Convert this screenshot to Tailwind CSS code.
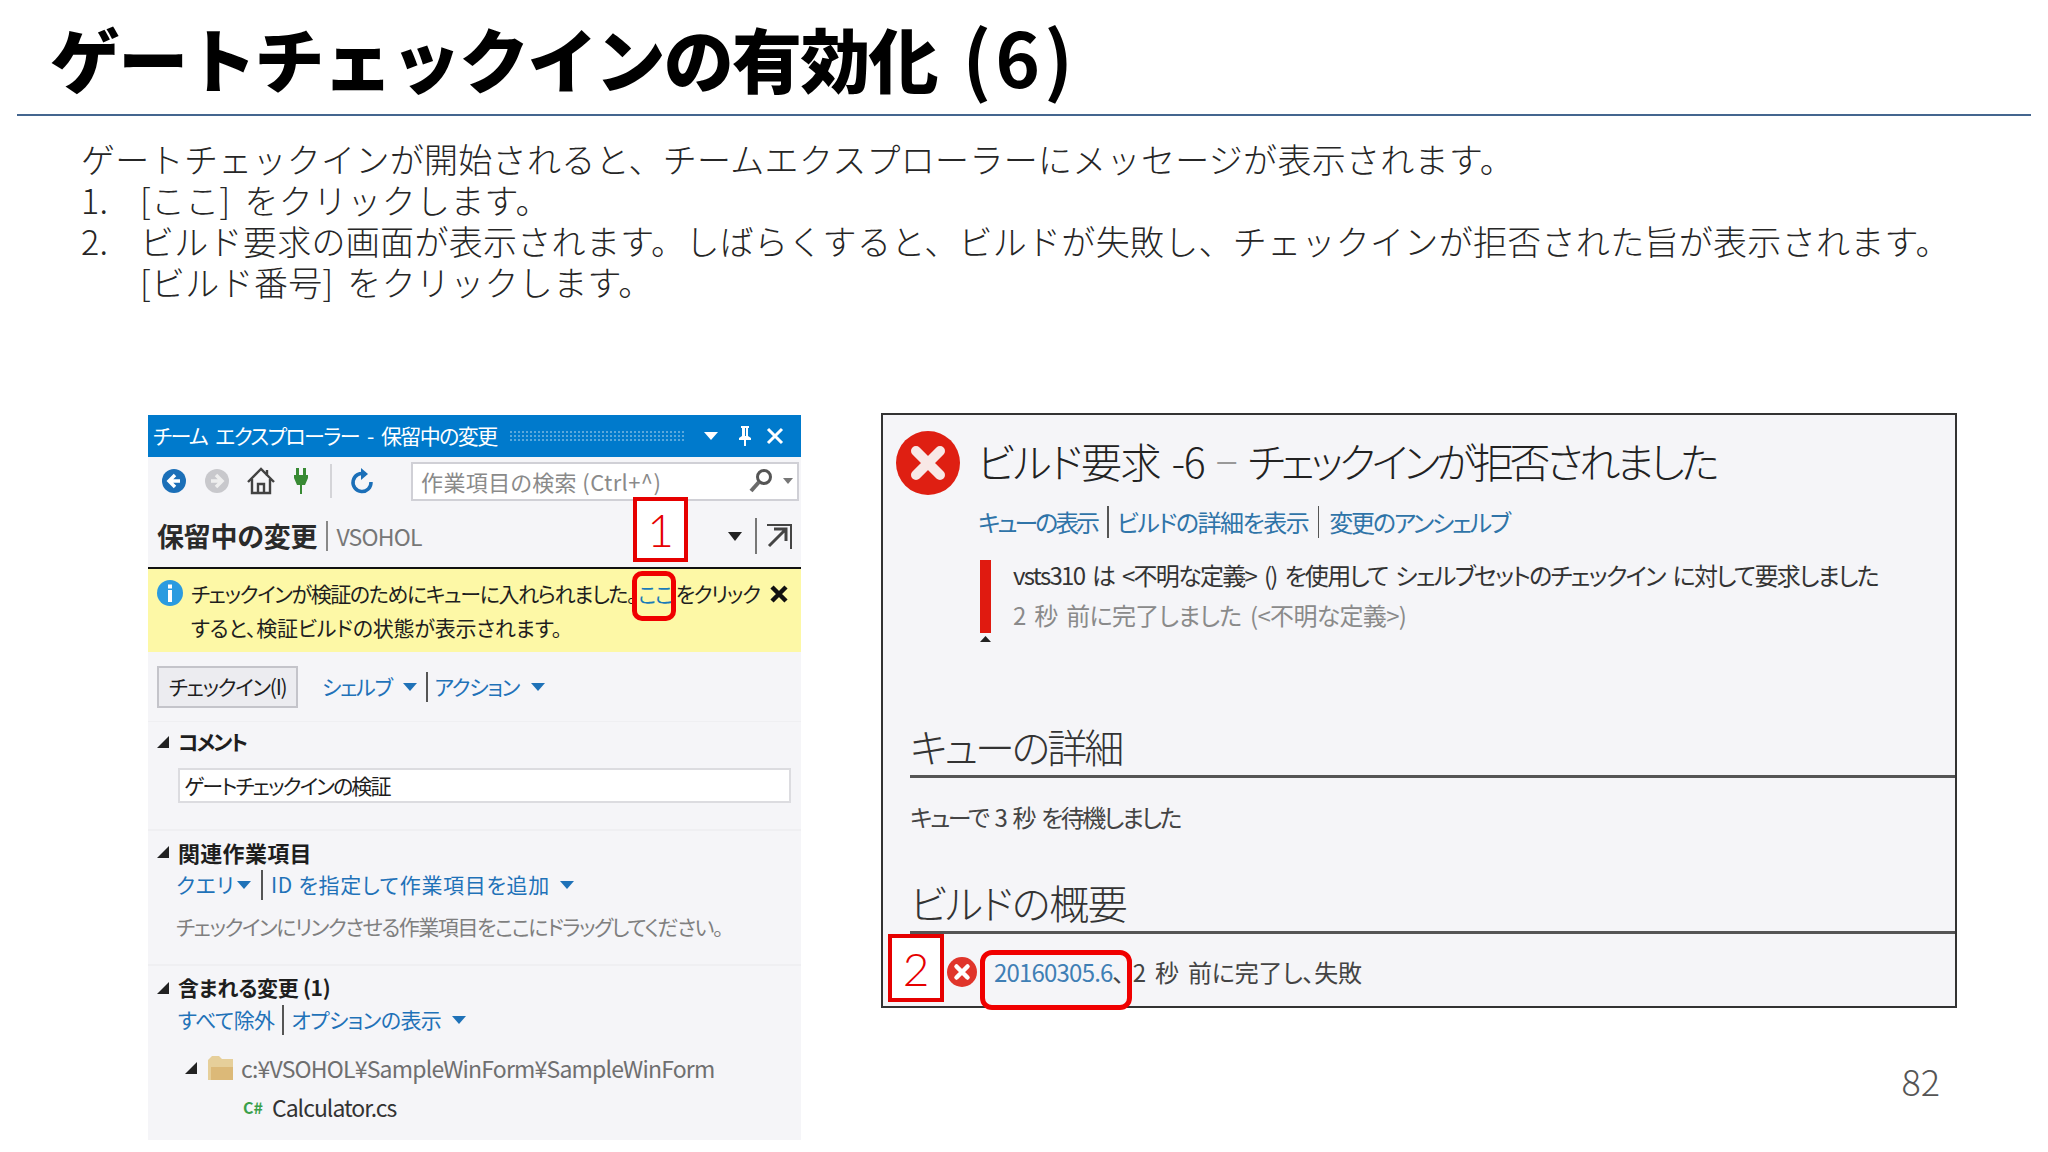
<!DOCTYPE html>
<html lang="ja">
<head>
<meta charset="UTF-8">
<title>ゲートチェックインの有効化 (6)</title>
<script src="https://cdn.jsdelivr.net/npm/@tailwindcss/browser@4"></script>
</head>
<body class="bg-white w-[2048px] h-[1152px] overflow-hidden font-['Noto_Sans_CJK_JP','Noto_Sans',sans-serif] text-[#262626]">
  <!-- slide title -->
  <header class="h-[116px] mx-[17px] border-b-2 border-[#44668f] pl-[33px] pt-[10px]">
    <h1 class="text-[70px] leading-[96px] font-black text-black tracking-[-1.8px] whitespace-nowrap">ゲートチェックインの有効化<span class="ml-[26px] text-[76px] leading-none tracking-[4px] font-bold">(6)</span></h1>
  </header>

  <!-- slide body -->
  <div class="pl-[81px] pt-[22px] h-[297px] text-[34px] leading-[41px] text-[#262626] tracking-[0.3px] font-light whitespace-nowrap [word-spacing:6px]">
    <p>ゲートチェックインが開始されると、チームエクスプローラーにメッセージが表示されます。</p>
    <div class="flex"><span class="w-[59px]">1.</span><span>[ここ] をクリックします。</span></div>
    <div class="flex"><span class="w-[59px]">2.</span><span>ビルド要求の画面が表示されます。しばらくすると、ビルドが失敗し、チェックインが拒否された旨が表示されます。</span></div>
    <div class="pl-[59px]">[ビルド番号] をクリックします。</div>
  </div>

  <div class="flex items-start pl-[148px]">
    <!-- team explorer -->
    <div class="relative mt-[2px] w-[653px] h-[725px] bg-[#f5f5f8] shrink-0 whitespace-nowrap text-[#1e1e1e] [font-feature-settings:'palt']">
      <div class="h-[42px] bg-[#007acc] flex items-center pl-[5px] text-white text-[21px] tracking-[-1.6px] [word-spacing:5px]">
        <span class="w-[356px]">チーム エクスプローラー - 保留中の変更</span>
        <div class="w-[177px] h-[12px] bg-[radial-gradient(#5aa8dc_1px,transparent_1px)] bg-[length:4px_4px]"></div>
        <svg class="ml-[17px]" width="16" height="10" viewBox="0 0 16 10"><path d="M1 1h14l-7 8z" fill="#fff"/></svg>
        <svg class="ml-[19px]" width="14" height="22" viewBox="0 0 14 22"><path d="M3 1h8v2h-1v8l3 2v2H8v6H6v-6H1v-2l3-2V3H3zM7 3v8h1V3z" fill="#fff"/></svg>
        <svg class="ml-[14px]" width="18" height="18" viewBox="0 0 18 18"><path d="M2 2l14 14M16 2L2 16" stroke="#fff" stroke-width="3"/></svg>
      </div>

      <div class="h-[48px] flex items-center pl-[14px] pr-[1px]">
        <svg width="24" height="24" viewBox="0 0 24 24"><circle cx="12" cy="12" r="12" fill="#1b6fb8"/><path d="M13 6l-6 6 6 6M7 12h11" fill="none" stroke="#fff" stroke-width="3.5"/></svg>
        <svg class="ml-[19px]" width="24" height="24" viewBox="0 0 24 24"><circle cx="12" cy="12" r="12" fill="#c8c8cc"/><path d="M11 6l6 6-6 6M17 12H6" fill="none" stroke="#eee" stroke-width="3.5"/></svg>
        <svg class="ml-[17px]" width="30" height="30" viewBox="0 0 30 30"><path d="M2 16L15 3l13 13M6 13v14h18V13M12 27v-9h6v9M21 4v6" fill="none" stroke="#424242" stroke-width="2.4"/></svg>
        <svg class="ml-[17px]" width="16" height="28" viewBox="0 0 16 28"><path d="M3 1h3v7H3zM10 1h3v7h-3zM1 8h14v3l-3 7H9v9H7v-9H4l-3-7z" fill="#388a34"/></svg>
        <div class="ml-[21px] w-[2px] h-[34px] bg-[#d4d4d8]"></div>
        <svg class="ml-[18px]" width="24" height="28" viewBox="0 0 24 28"><path d="M15 7a9 9 0 1 0 6 8" fill="none" stroke="#1b6fb8" stroke-width="3.5"/><path d="M11 1v12l7-6z" fill="#1b6fb8"/></svg>
        <div class="ml-[37px] w-[388px] h-[39px] bg-white border-2 border-[#d0d0d6] flex items-center pl-[8px] pr-[4px] text-[22px] text-[#8a8a8a] tracking-[0.4px]">
          <span>作業項目の検索 (Ctrl+^)</span>
          <svg class="ml-auto" width="26" height="26" viewBox="0 0 26 26"><circle cx="16" cy="9" r="6.5" fill="none" stroke="#555" stroke-width="3"/><path d="M11 14l-8 9" stroke="#6b6b6b" stroke-width="4"/></svg>
          <svg class="ml-[9px]" width="10" height="6" viewBox="0 0 10 6"><path d="M0 0h10L5 6z" fill="#777"/></svg>
        </div>
      </div>

      <div class="h-[62px] flex items-center pl-[9px]">
        <span class="text-[27px] font-bold tracking-[-0.2px] text-[#2a2a2a]">保留中の変更</span>
        <div class="ml-[9px] w-[2px] h-[30px] bg-[#888]"></div>
        <span class="ml-[8px] text-[23px] text-[#777] tracking-[-0.8px]">VSOHOL</span>
        <svg class="ml-[306px]" width="14" height="9" viewBox="0 0 14 9"><path d="M0 0h14L7 9z" fill="#222"/></svg>
        <div class="ml-[13px] w-[2px] h-[36px] bg-[#777]"></div>
        <svg class="ml-[9px]" width="26" height="26" viewBox="0 0 26 26"><path d="M1 2h24v24" fill="none" stroke="#444" stroke-width="2"/><path d="M3 23L20 6M8 6h12v12" fill="none" stroke="#444" stroke-width="3"/></svg>
      </div>

      <div class="h-[85px] bg-[#fdf8a6] border-t-2 border-[#111] relative pl-[43px] pt-[7px] text-[21px] leading-[34px]">
        <svg class="absolute left-[9px] top-[11px]" width="26" height="26" viewBox="0 0 26 26"><circle cx="13" cy="13" r="13" fill="#2a9be0"/><rect x="11" y="10" width="4" height="12" fill="#fff"/><rect x="11" y="4.5" width="4" height="4" fill="#fff"/></svg>
        <div class="tracking-[-1.4px]">チェックインが検証のためにキューに入れられました。<span class="text-[#1a7bb8] ml-[2px]">ここ</span><span class="ml-[4px]">をクリック</span></div>
        <div class="tracking-[-0.2px]">すると、検証ビルドの状態が表示されます。</div>
        <svg class="absolute left-[621px] top-[15px]" width="20" height="20" viewBox="0 0 20 20"><path d="M3 3l14 14M17 3L3 17" stroke="#111" stroke-width="4.5"/></svg>
      </div>

      <div class="h-[70px] flex items-center pl-[9px] border-b border-[#efeff2] text-[21px] tracking-[-1.3px]">
        <div class="w-[141px] h-[42px] bg-[#ececf0] border-2 border-[#c4c4ca] flex items-center justify-center">チェックイン(I)</div>
        <span class="ml-[24px] text-[#1f72b8]">シェルブ</span>
        <svg class="ml-[11px]" width="14" height="8" viewBox="0 0 14 8"><path d="M0 0h14L7 8z" fill="#1f72b8"/></svg>
        <div class="ml-[9px] w-[2px] h-[30px] bg-[#555]"></div>
        <span class="ml-[7px] text-[#1f72b8]">アクション</span>
        <svg class="ml-[12px]" width="14" height="8" viewBox="0 0 14 8"><path d="M0 0h14L7 8z" fill="#1f72b8"/></svg>
      </div>

      <!-- comment -->
      <div class="h-[109px] border-b-2 border-[#efeff2] pl-[30px] pt-[4px]">
        <div class="flex items-center h-[32px] -ml-[21px] text-[21px] font-bold tracking-[-2px]">
          <svg width="12" height="12" viewBox="0 0 12 12"><path d="M12 0v12H0z" fill="#222"/></svg>
          <span class="ml-[9px]">コメント</span>
        </div>
        <div class="mt-[10px] w-[613px] h-[35px] bg-white border-2 border-[#dcdce0] flex items-center pl-[4px] text-[21px] tracking-[-1.9px]">ゲートチェックインの検証</div>
      </div>

      <!-- related work items -->
      <div class="h-[135px] border-b-2 border-[#efeff2] pl-[30px] pt-[5px] text-[21px]">
        <div class="flex items-center h-[32px] -ml-[21px] font-bold text-[22px] tracking-[0.3px]">
          <svg width="12" height="12" viewBox="0 0 12 12"><path d="M12 0v12H0z" fill="#222"/></svg>
          <span class="ml-[9px]">関連作業項目</span>
        </div>
        <div class="flex items-center h-[32px] mt-[1px] -ml-[2px] text-[#1f72b8] tracking-[0.7px]">
          <span class="w-[51px]">クエリ</span>
          <svg class="ml-[10px]" width="14" height="8" viewBox="0 0 14 8"><path d="M0 0h14L7 8z" fill="#1f72b8"/></svg>
          <div class="ml-[10px] w-[2px] h-[30px] bg-[#555]"></div>
          <span class="ml-[8px]">ID を指定して作業項目を追加</span>
          <svg class="ml-[10px]" width="14" height="8" viewBox="0 0 14 8"><path d="M0 0h14L7 8z" fill="#1f72b8"/></svg>
        </div>
        <div class="mt-[9px] h-[32px] -ml-[2px] leading-[32px] text-[#7f7f7f] tracking-[-1.45px]">チェックインにリンクさせる作業項目をここにドラッグしてください。</div>
      </div>

      <!-- included changes -->
      <div class="pl-[30px] pt-[6px] text-[21px]">
        <div class="flex items-center h-[32px] -ml-[21px] font-bold tracking-[-0.3px]">
          <svg width="12" height="12" viewBox="0 0 12 12"><path d="M12 0v12H0z" fill="#222"/></svg>
          <span class="ml-[9px]">含まれる変更 (1)</span>
        </div>
        <div class="flex items-center h-[32px] text-[#1f72b8] tracking-[-0.6px]">
          <span>すべて除外</span>
          <div class="ml-[8px] w-[2px] h-[30px] bg-[#555]"></div>
          <span class="ml-[7px]">オプションの表示</span>
          <svg class="ml-[11px]" width="14" height="8" viewBox="0 0 14 8"><path d="M0 0h14L7 8z" fill="#1f72b8"/></svg>
        </div>
        <div class="flex items-center mt-[14px] h-[36px] pl-[7px] text-[#6f6f6f] text-[23px] tracking-[-0.8px]">
          <svg width="12" height="12" viewBox="0 0 12 12"><path d="M12 0v12H0z" fill="#222"/></svg>
          <svg class="ml-[10px]" width="27" height="26" viewBox="0 0 27 26"><path d="M1 25V5l4-4h7l3 3h11v21z" fill="#e6cf9a"/><path d="M4 25V12h22v13z" fill="#dcb978"/></svg>
          <span class="ml-[7px]">c:¥VSOHOL¥SampleWinForm¥SampleWinForm</span>
        </div>
        <div class="flex items-center mt-[3px] h-[36px] pl-[65px] text-[#333] text-[23px] tracking-[-1px]">
          <span class="w-[29px] text-[16px] leading-none font-bold text-[#3aa04a] tracking-[0px]">C#</span>
          <span>Calculator.cs</span>
        </div>
      </div>

      <!-- callouts -->
      <div class="absolute left-[485px] top-[82px] w-[55px] h-[65px] bg-white border-[4px] border-[#e60000] flex items-center justify-center text-[46px] text-[#e60000] font-light font-['Lato']">1</div>
      <div class="absolute left-[484px] top-[156px] w-[44px] h-[50px] border-[5px] border-[#f00000] rounded-[10px]"></div>
    </div>

    <!-- build request -->
    <div class="ml-[80px] shrink-0 w-[1076px]">
      <div class="relative h-[595px] bg-[#f5f5f8] border-2 border-[#333] whitespace-nowrap [font-feature-settings:'palt'] [word-spacing:4px]">
        <div class="flex items-center h-[96px] pl-[13px] pb-[4px]">
          <svg class="mt-[4px]" width="64" height="64" viewBox="0 0 64 64"><circle cx="32" cy="32" r="32" fill="#df1f12"/><path d="M20 20l24 24M44 20L20 44" stroke="#f8e8e6" stroke-width="10" stroke-linecap="round"/></svg>
          <span class="ml-[17px] text-[41px] font-light text-[#222] tracking-[-1.5px]">ビルド要求 -6 <span class="text-[#999]">−</span> <span class="tracking-[-4px]">チェックインが拒否されました</span></span>
        </div>
        <div class="flex items-center h-[36px] mt-[-7px] pl-[95px] text-[24px] text-[#2f74a8]">
          <span class="tracking-[-3.1px]">キューの表示</span>
          <div class="ml-[10px] w-[2px] h-[32px] bg-[#555]"></div>
          <span class="ml-[8px] tracking-[-1.5px]">ビルドの詳細を表示</span>
          <div class="ml-[10px] w-[1px] h-[32px] bg-[#555]"></div>
          <span class="ml-[10px] tracking-[-2.2px]">変更のアンシェルブ</span>
        </div>
        <div class="flex mt-[20px] pl-[97px]">
          <div class="flex flex-col items-center w-[11px]">
            <div class="w-[11px] h-[73px] bg-[#e01a10]"></div>
            <svg class="mt-[3px]" width="11" height="6" viewBox="0 0 11 6"><path d="M0 6h11L5.500 0z" fill="#222"/></svg>
          </div>
          <div class="ml-[22px] -mt-[5px] text-[24px] leading-[40px]">
            <div class="text-[#333] tracking-[-1.7px]">vsts310 は &lt;不明な定義&gt; () を使用して シェルブセットのチェックイン に対して要求しました</div>
            <div class="text-[#8a8a8a] tracking-[-0.7px]">2 秒 前に完了しました (&lt;不明な定義&gt;)</div>
          </div>
        </div>
        <div class="ml-[27px] mt-[75px] h-[61px] border-b-[3px] border-[#555] text-[40px] leading-[58px] text-[#333] tracking-[-3px] font-light">キューの詳細</div>
        <div class="ml-[27px] mt-[22px] h-[34px] leading-[34px] text-[24px] text-[#444] tracking-[-2.4px]">キューで 3 秒 を待機しました</div>
        <div class="ml-[27px] mt-[39px] h-[61px] border-b-[3px] border-[#555] text-[40px] leading-[58px] text-[#333] tracking-[-1.3px] font-light">ビルドの概要</div>
        <div class="flex items-center h-[78px] pl-[64px] -mt-[1px] text-[24px] text-[#444]">
          <svg width="30" height="30" viewBox="0 0 30 30"><circle cx="15" cy="15" r="15" fill="#e0352b"/><path d="M9.500 9.500l11 11M20.500 9.500l-11 11" stroke="#fff" stroke-width="4.500" stroke-linecap="round"/></svg>
          <span class="ml-[17px] text-[#3f7fb5] tracking-[-0.8px]">20160305.6</span><span class="tracking-[-0.8px]">、</span><span class="ml-[9px] tracking-[-0.2px]">2 秒 前に完了し、失敗</span>
        </div>
        <!-- callouts -->
        <div class="absolute left-[5px] top-[519px] w-[56px] h-[68px] bg-white border-[4px] border-[#e60000] flex items-center justify-center text-[46px] text-[#e60000] font-light font-['Lato']">2</div>
        <div class="absolute left-[97px] top-[535px] w-[152px] h-[60px] border-[5px] border-[#f00000] rounded-[12px]"></div>
      </div>
      <div class="mt-[50px] pr-[17px] text-right text-[36px] leading-[44px] font-light text-[#555]">82</div>
    </div>
  </div>
</body>
</html>
